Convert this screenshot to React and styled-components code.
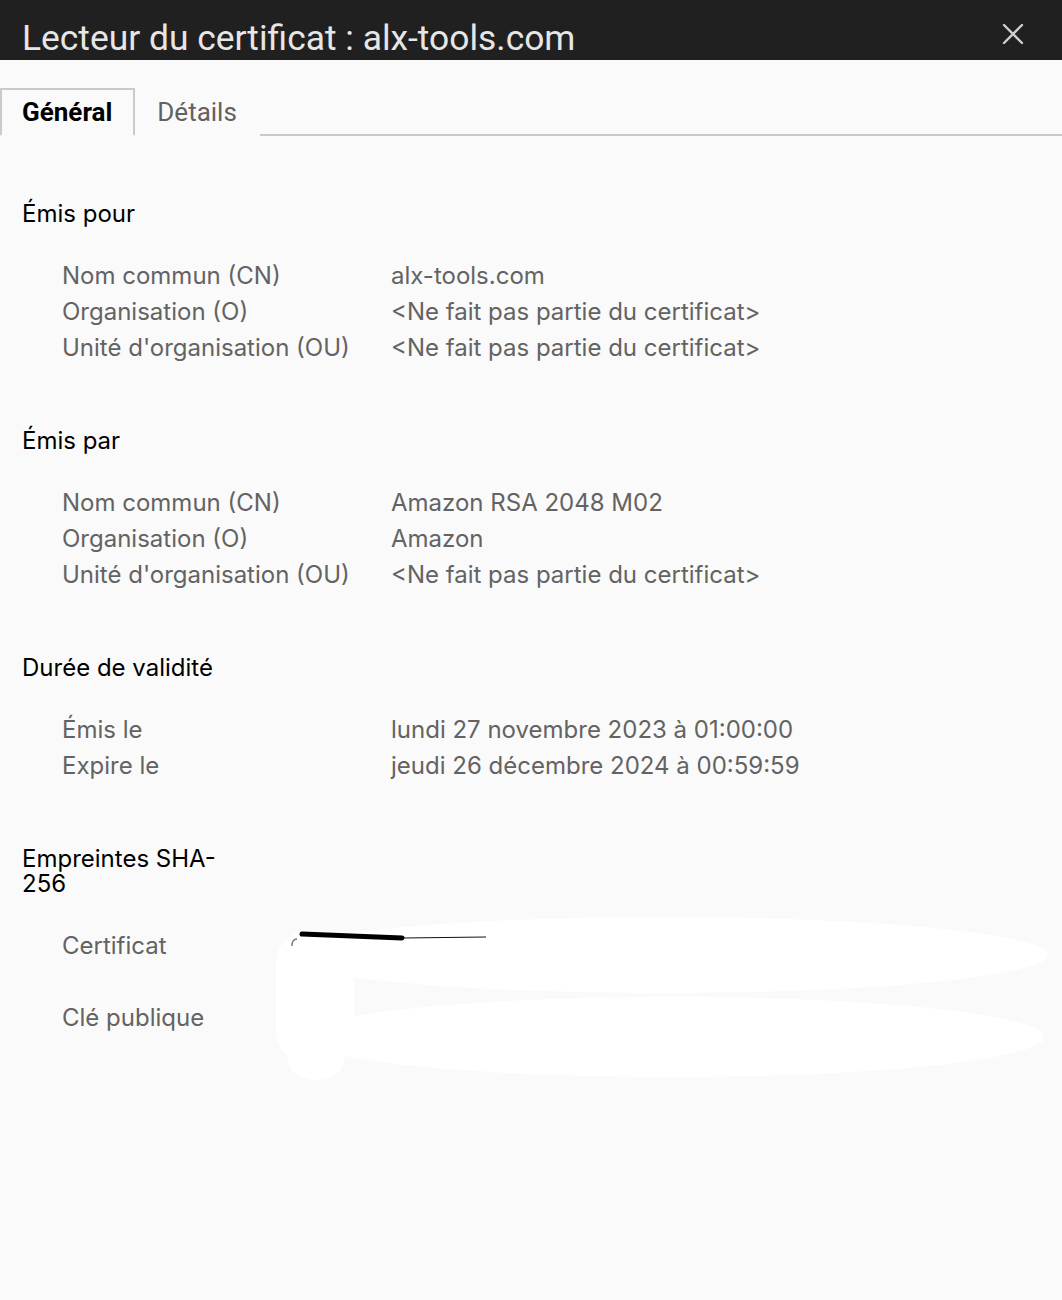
import React from "react";
import styled, { createGlobalStyle } from "styled-components";

const GlobalStyle = createGlobalStyle`
  html, body {
    margin: 0;
    padding: 0;
    background: #fafafa;
  }
  * {
    box-sizing: border-box;
  }
`;

const sections = [
  {
    title: "Émis pour",
    rows: [
      ["Nom commun (CN)", "alx-tools.com"],
      ["Organisation (O)", "<Ne fait pas partie du certificat>"],
      ["Unité d'organisation (OU)", "<Ne fait pas partie du certificat>"],
    ],
  },
  {
    title: "Émis par",
    rows: [
      ["Nom commun (CN)", "Amazon RSA 2048 M02"],
      ["Organisation (O)", "Amazon"],
      ["Unité d'organisation (OU)", "<Ne fait pas partie du certificat>"],
    ],
  },
  {
    title: "Durée de validité",
    rows: [
      ["Émis le", "lundi 27 novembre 2023 à 01:00:00"],
      ["Expire le", "jeudi 26 décembre 2024 à 00:59:59"],
    ],
  },
];

function App() {
  return (
    <Dialog>
      <GlobalStyle />
      <TitleBar>
        <Title>Lecteur du certificat : alx-tools.com</Title>
        <CloseButton aria-label="Fermer">
          <svg width="22" height="22" viewBox="0 0 22 22">
            <path d="M2 2L20 20M20 2L2 20" stroke="#cfcfcf" strokeWidth="2.4" strokeLinecap="round" />
          </svg>
        </CloseButton>
      </TitleBar>

      <Tabs>
        <Tab $active>Général</Tab>
        <Tab>Détails</Tab>
      </Tabs>

      <Content>
        {sections.map((s) => (
          <Section key={s.title}>
            <SectionTitle>{s.title}</SectionTitle>
            <Fields>
              {s.rows.map(([label, value]) => (
                <React.Fragment key={label}>
                  <Label>{label}</Label>
                  <Value>{value}</Value>
                </React.Fragment>
              ))}
            </Fields>
          </Section>
        ))}

        <Section>
          <SectionTitle>Empreintes SHA-256</SectionTitle>
          <FingerprintFields>
            <Label>Certificat</Label>
            <Fingerprint />
            <Label>Clé publique</Label>
            <Fingerprint />
            {/* white redaction scribble drawn over the fingerprint values */}
            <Redaction viewBox="0 0 790 175" width="790" height="175">
              <ellipse cx="394" cy="45" rx="384" ry="38" fill="#fff" />
              <ellipse cx="402" cy="127" rx="372" ry="40" fill="#fff" />
              <rect x="6" y="22" width="78" height="130" rx="30" fill="#fff" />
              <ellipse cx="46" cy="150" rx="28" ry="20" fill="#fff" />
              <path d="M22 36c0-5 2-7 5-7" stroke="#777" strokeWidth="1.4" fill="none" />
              <path d="M32 24L132 28" stroke="#000" strokeWidth="5" strokeLinecap="round" />
              <path d="M132 28L216 27" stroke="#111" strokeWidth="1.2" />
            </Redaction>
          </FingerprintFields>
        </Section>
      </Content>
    </Dialog>
  );
}

export default App;

const Dialog = styled.div`
  width: 1062px;
  min-height: 1300px;
  background: #fafafa;
`;

const TitleBar = styled.header`
  height: 60px;
  background: #202020;
  display: flex;
  align-items: flex-end;
  justify-content: space-between;
  padding: 0 38px 2px 22px;
`;

const Title = styled.h1`
  margin: 0;
  font-family: Roboto, "Liberation Sans", sans-serif;
  font-weight: 400;
  font-size: 35.4px;
  line-height: 40px;
  color: #e6e6e6;
  white-space: nowrap;
`;

const CloseButton = styled.button`
  border: none;
  background: none;
  padding: 0;
  width: 22px;
  height: 22px;
  margin-bottom: 13px;
  display: flex;
  cursor: pointer;
`;

const Tabs = styled.nav`
  display: flex;
  align-items: flex-end;
  height: 76px;
  padding-top: 28px;
  border-bottom: 2px solid #cacaca;
`;

const Tab = styled.div`
  height: 48px;
  margin-bottom: -2px;
  padding: 0 21px 0 20px;
  display: flex;
  align-items: center;
  font-family: Roboto, "Liberation Sans", sans-serif;
  font-size: 26px;
  font-weight: ${(p) => (p.$active ? 700 : 400)};
  color: ${(p) => (p.$active ? "#000" : "#616161")};
  background: #fafafa;
  border: 2px solid ${(p) => (p.$active ? "#cacaca" : "transparent")};
  border-bottom-color: #fafafa;
`;

const Content = styled.main`
  padding: 65px 0 0 22px;
  font-family: Inter, "Noto Sans", sans-serif;
  font-size: 24px;
`;

const Section = styled.section`
  margin-bottom: 62px;
`;

const SectionTitle = styled.h2`
  margin: 0 0 32px;
  width: 210px;
  font-size: 24px;
  font-weight: 400;
  line-height: 25px;
  color: #000;
`;

const Fields = styled.div`
  display: grid;
  grid-template-columns: 329px 1fr;
  padding-left: 40px;
  line-height: 36px;
`;

const FingerprintFields = styled(Fields)`
  position: relative;
  grid-template-columns: 227px 1fr;
`;

const Label = styled.div`
  color: #636363;
`;

const Value = styled.div`
  color: #636363;
`;

const Fingerprint = styled.div`
  height: 72px;
`;

const Redaction = styled.svg`
  position: absolute;
  left: 248px;
  top: -18px;
`;
